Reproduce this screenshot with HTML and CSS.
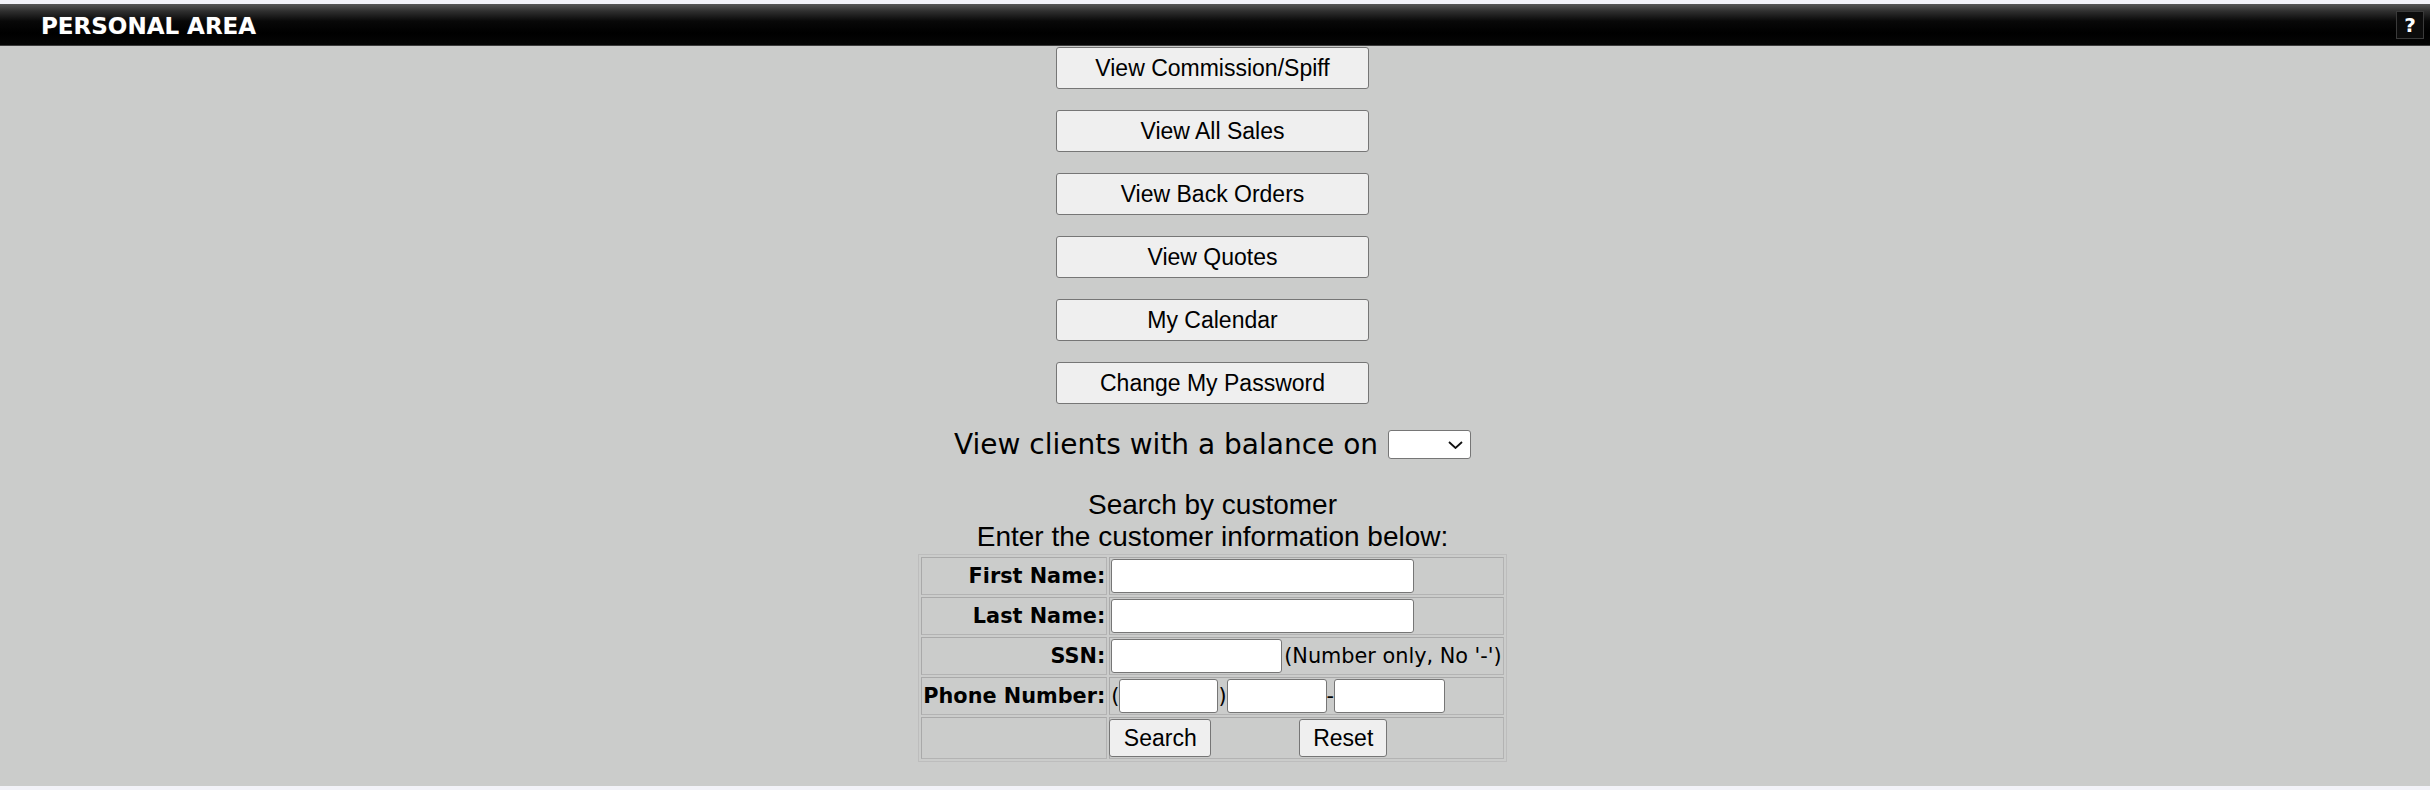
FILE: index.html
```html
<!DOCTYPE html>
<html>
<head>
<meta charset="utf-8">
<title>Personal Area</title>
<link rel="stylesheet" href="styles.css">
</head>
<body>
<div class="page">
  <div class="titlebar">
    <span class="title">PERSONAL AREA</span>
    <span class="help">?</span>
  </div>
  <div class="content">
    <div class="actions">
      <button class="btn">View Commission/Spiff</button>
      <button class="btn">View All Sales</button>
      <button class="btn">View Back Orders</button>
      <button class="btn">View Quotes</button>
      <button class="btn">My Calendar</button>
      <button class="btn">Change My Password</button>
    </div>
    <div class="balance">
      <span class="balance-text">View clients with a balance on</span>
      <span class="select-wrap">
        <select class="balance-select"><option></option></select>
        <svg class="chevron" width="15" height="8" viewBox="0 0 15 8"><path d="M1 1 L7.5 7 L14 1" fill="none" stroke="#111" stroke-width="1.8"/></svg>
      </span>
    </div>
    <div class="search-head">
      <div>Search by customer</div>
      <div>Enter the customer information below:</div>
    </div>
    <table class="search-table">
      <tr>
        <td class="lbl">First Name:</td>
        <td class="val"><div class="field"><input class="inp inp-name" type="text"></div></td>
      </tr>
      <tr>
        <td class="lbl">Last Name:</td>
        <td class="val"><div class="field"><input class="inp inp-name" type="text"></div></td>
      </tr>
      <tr>
        <td class="lbl">SSN:</td>
        <td class="val"><div class="field"><input class="inp inp-ssn" type="text"><span class="note">(Number only, No '-')</span></div></td>
      </tr>
      <tr>
        <td class="lbl">Phone Number:</td>
        <td class="val"><div class="field"><span class="note">(</span><input class="inp inp-area" type="text"><span class="note">)</span><input class="inp inp-pre" type="text"><span class="note">-</span><input class="inp inp-line" type="text"></div></td>
      </tr>
      <tr>
        <td class="lbl"></td>
        <td class="val"><div class="field field-btns"><button class="sbtn sbtn-search">Search</button><button class="sbtn sbtn-reset">Reset</button></div></td>
      </tr>
    </table>
  </div>
</div>
</body>
</html>
```
FILE: styles.css
```css
html, body {
  margin: 0;
  padding: 0;
}
body {
  background: #f2f2f8;
  font-family: "Liberation Sans", Arial, sans-serif;
  color: #000;
}
.page {
  padding: 4px 0;
}
.titlebar {
  height: 41px;
  display: flex;
  align-items: center;
  justify-content: space-between;
  padding: 0 6px 0 41px;
  background: linear-gradient(#565656 0%, #2e2e2e 18%, #080808 42%, #000 70%, #050505 100%);
  border-bottom: 1px solid #3c3c3c;
}
.title {
  font-family: "DejaVu Sans", Verdana, sans-serif;
  font-weight: bold;
  font-size: 23px;
  color: #fff;
  padding-top: 3px;
  text-shadow: 0 0 1px rgba(255,255,255,0.3);
}
.help {
  width: 26px;
  height: 26px;
  margin-top: 1px;
  border: 1px solid #3a3a3a;
  background: #0c0c0c;
  color: #fff;
  font-family: "DejaVu Sans", Verdana, sans-serif;
  font-weight: bold;
  font-size: 20px;
  display: flex;
  align-items: center;
  justify-content: center;
}
.content {
  background: #cbcccb;
  height: 740px;
  padding-right: 5px;
  box-sizing: border-box;
  padding-top: 1px;
  display: flex;
  flex-direction: column;
  align-items: center;
}
.actions {
  display: flex;
  flex-direction: column;
  align-items: center;
  gap: 21px;
}
.btn {
  width: 313px;
  height: 42px;
  box-sizing: border-box;
  background: #efefef;
  border: 1px solid #767676;
  border-radius: 3px;
  font-family: "Liberation Sans", Arial, sans-serif;
  font-size: 23px;
  color: #000;
  padding: 0;
}
.balance {
  margin-top: 26px;
  height: 29px;
  display: flex;
  align-items: center;
}
.balance-text {
  font-family: "DejaVu Sans", Verdana, sans-serif;
  font-size: 28px;
  line-height: 33px;
}
.select-wrap {
  position: relative;
  margin-left: 10px;
  width: 83px;
  height: 29px;
}
.balance-select {
  -webkit-appearance: none;
  appearance: none;
  display: block;
  width: 83px;
  height: 29px;
  box-sizing: border-box;
  background: #fff;
  border: 1px solid #767676;
  border-radius: 3px;
  font-size: 18px;
  margin: 0;
}
.chevron {
  position: absolute;
  right: 8px;
  top: 11px;
  pointer-events: none;
}
.search-head {
  margin-top: 30px;
  text-align: center;
  font-family: "Liberation Sans", Arial, sans-serif;
  font-size: 28px;
  line-height: 32px;
}
.search-table {
  margin-top: 1px;
  border: 1px solid #bdbdbd;
  border-spacing: 2px;
  background: #cbcccb;
}
.search-table td {
  border: 1px solid #b3b3b3;
  border-top-color: #a9a9a9;
  border-left-color: #a9a9a9;
  padding: 1px;
  vertical-align: middle;
  white-space: nowrap;
}
.lbl {
  font-family: "DejaVu Sans", Verdana, sans-serif;
  font-weight: bold;
  font-size: 20.8px;
  text-align: right;
}
.field {
  display: flex;
  align-items: center;
  height: 34px;
}
.field-btns {
  height: 38px;
}
.note {
  font-family: "DejaVu Sans", Verdana, sans-serif;
  font-size: 20.8px;
}
.inp {
  height: 34px;
  box-sizing: border-box;
  background: #fff;
  border: 1px solid #767676;
  border-radius: 3px;
  margin: 0;
  padding: 1px 3px;
  font-size: 20px;
}
.inp-name { width: 303px; }
.inp-ssn { width: 171px; margin-right: 2px; }
.inp-area { width: 99px; }
.inp-pre { width: 100px; }
.inp-line { width: 111px; }
.sbtn {
  height: 38px;
  box-sizing: border-box;
  background: #efefef;
  border: 1px solid #767676;
  border-radius: 3px;
  font-family: "Liberation Sans", Arial, sans-serif;
  font-size: 23px;
  color: #000;
  padding: 0;
}
.sbtn-search { width: 102px; margin-left: -2px; }
.sbtn-reset { width: 88px; margin-left: 88px; }
```
